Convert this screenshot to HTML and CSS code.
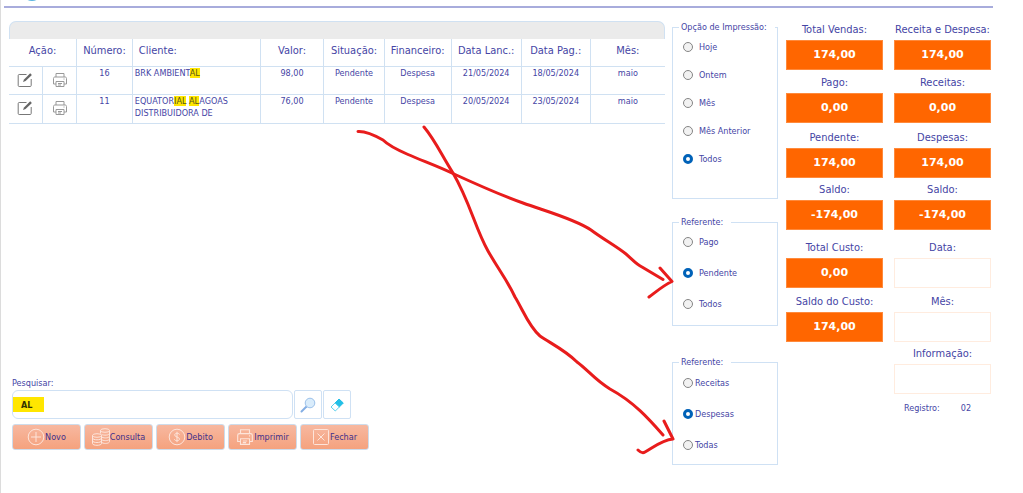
FILE: index.html
```html
<!DOCTYPE html>
<html lang="pt-BR">
<head>
<meta charset="utf-8">
<title>Vendas e Despesas</title>
<link rel="stylesheet" href="styles.css">
</head>
<body>
<header class="topbar">
  <svg class="logo" width="20" height="6" viewBox="0 0 20 6" aria-hidden="true"><circle cx="10" cy="-9" r="10" fill="#5bb5e0"/></svg>
</header>
<main class="page">
  <section class="left">
    <div class="panel">
      <div class="panel-bar"></div>
      <table class="list">
        <colgroup>
          <col style="width:5.1%"><col style="width:5.2%"><col style="width:8.5%"><col style="width:19.5%"><col style="width:9.7%"><col style="width:9.2%"><col style="width:10.2%"><col style="width:10.7%"><col style="width:10.5%"><col style="width:11.4%">
        </colgroup>
        <thead>
          <tr><th colspan="2">Ação:</th><th>Número:</th><th class="name">Cliente:</th><th>Valor:</th><th>Situação:</th><th>Financeiro:</th><th>Data Lanc.:</th><th>Data Pag.:</th><th>Mês:</th></tr>
        </thead>
        <tbody>
          <tr>
            <td><button class="icon-btn" type="button" aria-label="Editar"><svg width="16" height="16" viewBox="0 0 16 16"><use href="#edit"/></svg></button></td>
            <td><button class="icon-btn" type="button" aria-label="Imprimir"><svg width="16" height="16" viewBox="0 0 16 16"><use href="#print"/></svg></button></td>
            <td>16</td><td class="name">BRK AMBIENT<mark>AL</mark></td><td>98,00</td><td>Pendente</td><td>Despesa</td><td>21/05/2024</td><td>18/05/2024</td><td>maio</td>
          </tr>
          <tr>
            <td><button class="icon-btn" type="button" aria-label="Editar"><svg width="16" height="16" viewBox="0 0 16 16"><use href="#edit"/></svg></button></td>
            <td><button class="icon-btn" type="button" aria-label="Imprimir"><svg width="16" height="16" viewBox="0 0 16 16"><use href="#print"/></svg></button></td>
            <td>11</td><td class="name">EQUATOR<mark>IAL</mark> <mark>AL</mark>AGOAS DISTRIBUIDORA DE</td><td>76,00</td><td>Pendente</td><td>Despesa</td><td>20/05/2024</td><td>23/05/2024</td><td>maio</td>
          </tr>
        </tbody>
      </table>
    </div>
    <form class="controls">
      <label class="small" for="q">Pesquisar:</label>
      <div class="search">
        <div class="field"><input id="q" type="text" value="AL"></div>
        <button class="square" type="button" aria-label="Pesquisar"><svg width="16" height="16" viewBox="0 0 16 16"><path d="M1.5 14.5 6.5 9.5" stroke="#83aee4" stroke-width="2" stroke-linecap="round"/><circle cx="10" cy="6" r="4.8" fill="#d9ecfb" stroke="#9cc1ea"/></svg></button>
        <button class="square" type="button" aria-label="Limpar"><svg width="14" height="14" viewBox="0 0 14 14"><path d="M9 1 13.3 5 9.3 9 5 5z" fill="#22bfe6" stroke="#22bfe6"/><path d="M5 5 9.3 9 5.3 13 1 9z" fill="#fff" stroke="#5dd0ec"/></svg></button>
      </div>
      <div class="actions">
        <button class="action" type="button"><svg width="18" height="18" viewBox="0 0 18 18"><circle cx="9" cy="9" r="7.8"/><path d="M9 4v10M4 9h10"/></svg>Novo</button>
        <button class="action" type="button"><svg width="18" height="18" viewBox="0 0 18 18"><ellipse cx="13" cy="2.5" rx="4.5" ry="1.8"/><path d="M8.5 2.5v3M17.5 2.5v11c0 2-5 2.5-7.5 1.2M17.5 5.3c0 2-6 2.5-8 1M17.5 8c0 2-5 2.5-7.5 1.2M17.5 10.7c0 2-5 2.5-7.5 1.2"/><ellipse cx="5" cy="7.5" rx="4.5" ry="1.8"/><path d="M.5 7.5v8c0 2.400 9 2.400 9 0v-8M.5 10c0 2.400 9 2.400 9 0M.5 12.700c0 2.400 9 2.400 9 0"/></svg>Consulta</button>
        <button class="action" type="button"><svg width="18" height="18" viewBox="0 0 18 18"><circle cx="9" cy="9" r="7.8"/><path d="M11.500 6.500C11.300 5 6.700 4.600 6.700 7S11.500 8.800 11.500 11 6.700 13.300 6.400 11.200M9 3.800v10.400"/></svg>Debito</button>
        <button class="action" type="button"><svg width="18" height="18" viewBox="0 0 16 16"><use href="#print"/></svg>Imprimir</button>
        <button class="action" type="button"><svg width="18" height="18" viewBox="0 0 18 18"><rect x="1.500" y="1.500" width="15" height="15" rx="1"/><path d="m5.500 5.500 7 7m0-7-7 7"/></svg>Fechar</button>
      </div>
    </form>
  </section>

  <section class="options">
    <fieldset class="group print">
      <legend>Opção de Impressão:</legend>
      <label><input type="radio" name="print">Hoje</label>
      <label><input type="radio" name="print">Ontem</label>
      <label><input type="radio" name="print">Mês</label>
      <label><input type="radio" name="print">Mês Anterior</label>
      <label><input type="radio" name="print" checked>Todos</label>
    </fieldset>
    <fieldset class="group status">
      <legend>Referente:</legend>
      <label><input type="radio" name="status">Pago</label>
      <label><input type="radio" name="status" checked>Pendente</label>
      <label><input type="radio" name="status">Todos</label>
    </fieldset>
    <fieldset class="group kind">
      <legend>Referente:</legend>
      <label><input type="radio" name="kind">Receitas</label>
      <label><input type="radio" name="kind" checked>Despesas</label>
      <label><input type="radio" name="kind">Todas</label>
    </fieldset>
  </section>

  <section class="totals">
    <div class="stat"><span>Total Vendas:</span><output>174,00</output></div>
    <div class="stat"><span>Receita e Despesa:</span><output>174,00</output></div>
    <div class="stat"><span>Pago:</span><output>0,00</output></div>
    <div class="stat"><span>Receitas:</span><output>0,00</output></div>
    <div class="stat"><span>Pendente:</span><output>174,00</output></div>
    <div class="stat"><span>Despesas:</span><output>174,00</output></div>
    <div class="stat"><span>Saldo:</span><output>-174,00</output></div>
    <div class="stat"><span>Saldo:</span><output>-174,00</output></div>
    <div class="stat"><span>Total Custo:</span><output>0,00</output></div>
    <div class="stat"><label for="date">Data:</label><input id="date" type="text"></div>
    <div class="stat"><span>Saldo do Custo:</span><output>174,00</output></div>
    <div class="stat"><label for="month">Mês:</label><input id="month" type="text"></div>
    <div class="stat info"><label for="info">Informação:</label><input id="info" type="text"></div>
    <div class="record"><span>Registro:</span><span>02</span></div>
  </section>
</main>

<svg class="notes" width="1023" height="493" viewBox="0 0 1023 493" aria-hidden="true">
  <path d="M358 131.500C366 131 376 136 383 140C389 146 400 151 408 154.500C423 161 440 167 454 174C478 185 500 195 523 203C545 211 575 219 591 230C603 239 616 246 626 254C632 259 636 264 642 267L663 279.500M660 268 672 281.500C664 285 657 291 649 297"/>
  <path d="M424 127C435 140 441 154 453 173C470 202 475 228 488 251C500 272 506 278 515 297C523 310 529 327 540 336C550 343 565 350 577 362C588 370 595 380 610 389C634 402 649 419 663 435M664 421 673 439C662 440 654 447 645 452C642 454 640 452 638 450"/>
</svg>

<svg width="0" height="0" class="symbols" aria-hidden="true">
  <symbol id="edit" viewBox="0 0 16 16"><path d="M9.500 2.500H2.200c-.6 0-1 .4-1 1v10c0 .6.400 1 1 1h11c.6 0 1-.4 1-1V7" fill="none" stroke="#777" stroke-width="1"/><path d="m6 10 1-2.600 6.200-6.200 1.700 1.700L8.600 9.100z" fill="#666" stroke="none"/></symbol>
  <symbol id="print" viewBox="0 0 16 16"><path d="M4 5V1.500h8V5M4 12H1.500V6.500c0-1 .5-1.500 1.500-1.500h10c1 0 1.500.5 1.500 1.500V12H12M4 9.500h8v5H4zM6 11.500h4M6 13h3M11.500 7h1" fill="none"/></symbol>
</svg>
</body>
</html>
```

FILE: styles.css
```css
* { box-sizing: border-box; }

body {
  margin: 0;
  position: relative;
  border-left: 1px solid #dcdcdc;
  min-height: 100vh;
  background: #fff;
  color: #4545a5;
  font-family: "DejaVu Sans Condensed", "DejaVu Sans", sans-serif;
  font-size: 9px;
  line-height: 12px;
}

button, input { font: inherit; color: inherit; }

.topbar {
  height: 8px;
  margin: 0 30px 0 3px;
  padding-left: 18px;
  border-bottom: 2px solid #a8acdc;
}

.logo { display: block; }

.page {
  display: grid;
  grid-template-columns: 1fr 106px 205px;
  column-gap: 7px;
  padding: 13px 33px 0 8px;
}

.left {
  display: flex;
  flex-direction: column;
  justify-content: space-between;
  padding-bottom: 15px;
}

.panel-bar {
  height: 18px;
  background: #ebebeb;
  border: 1px solid #d0e1f2;
  border-bottom: 0;
  border-radius: 7px 7px 0 0;
}

.list {
  width: 100%;
  table-layout: fixed;
  border-collapse: collapse;
}

.list th {
  height: 27px;
  padding: 0 0 3px;
  font-size: 11px;
  font-weight: normal;
}

.list td {
  height: 28px;
  padding: 0 0 4px;
  text-align: center;
  vertical-align: top;
}

.list th, .list td {
  border-right: 1px solid #d0e1f2;
  border-bottom: 1px solid #d0e1f2;
}

.list th:last-child, .list td:last-child { border-right: 0; }
.list .name { padding-left: 2px; text-align: left; }
.list th.name { padding-left: 6px; }

mark { background: #ffe600; color: #55551c; }

.icon-btn {
  display: block;
  margin: 5px auto 0;
  padding: 0;
  border: 0;
  background: none;
  stroke: #999;
  height: 16px;
}

.controls { padding-left: 3px; }
.controls label { display: block; margin-bottom: 1px; }

.search { display: flex; gap: 1px; }

.field {
  width: 281px;
  height: 29px;
  padding: 3px 0;
  border: 1px solid #cfe1f4;
  border-radius: 6px;
}

.field input {
  width: 100%;
  height: 21px;
  padding: 0 8px;
  border: 0;
  background: linear-gradient(#ffe600, #ffe600) 0 3px / 31px 15px no-repeat;
  color: #333300;
  font-weight: bold;
}

.square {
  display: grid;
  place-items: center;
  width: 28px;
  height: 29px;
  padding: 0;
  border: 1px solid #cfe1f4;
  border-radius: 2px;
  background: #fff;
  fill: none;
}

.actions { display: flex; gap: 3px; margin-top: 5px; }

.action {
  display: flex;
  align-items: center;
  justify-content: center;
  width: 69px;
  height: 26px;
  padding: 0;
  border: 1px solid #cddceb;
  border-radius: 3px;
  background: linear-gradient(#f7b8a0, #f5a27e);
  color: #41308c;
  stroke: #fde4da;
  fill: none;
}

.options { display: flex; flex-direction: column; }

.group {
  display: flex;
  flex-direction: column;
  margin: 0;
  min-width: 0;
  padding: 0 0 0 10px;
  border: 1px solid #cfe1f4;
}

.group legend { margin-left: -4px; padding: 0 8px 0 2px; }
.group label { display: flex; align-items: center; gap: 6px; }

.print { height: 178px; padding-top: 8px; gap: 16px; }
.status { height: 110px; margin-top: 17px; padding-top: 8px; gap: 19px; }
.kind { height: 109px; margin-top: 30px; padding-top: 9px; gap: 19px; }
.kind label { gap: 2px; }

.group input {
  appearance: none;
  width: 10px;
  height: 10px;
  margin: 0;
  border: 1px solid #858585;
  border-radius: 50%;
  background: #f2f2f2;
}

.group input:checked { border: 3px solid #0062b8; background: #fff; }

.totals {
  display: grid;
  grid-template-columns: 97px 97px;
  grid-template-rows: 49px 53px 55px 52px 58px 54px 52px 20px;
  column-gap: 11px;
  padding-left: 1px;
}

.stat {
  display: flex;
  flex-direction: column;
  justify-content: flex-end;
  gap: 3px;
  text-align: center;
  font-size: 11px;
  line-height: 14px;
  white-space: nowrap;
}

.stat output {
  height: 30px;
  border: 1px solid #ff8a3c;
  background: #ff6600;
  color: #fff;
  font-family: "DejaVu Sans", sans-serif;
  font-weight: bold;
  line-height: 27px;
}

.stat input {
  width: 100%;
  height: 30px;
  border: 1px solid #ffecdf;
  background: #fff;
}

.info, .record { grid-column: 2; }

.record {
  display: flex;
  align-items: flex-end;
  gap: 21px;
  padding-left: 10px;
}

.notes {
  position: absolute;
  top: 0;
  left: -1px;
  pointer-events: none;
  fill: none;
  stroke: #e81c1c;
  stroke-width: 3;
  stroke-linecap: round;
  stroke-linejoin: round;
}

.symbols { position: absolute; }
```
